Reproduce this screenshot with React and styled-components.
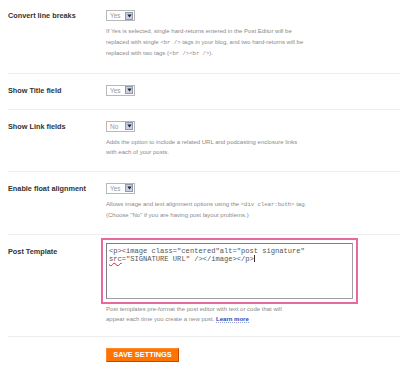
import styled, { createGlobalStyle } from 'styled-components'

const GlobalStyle = createGlobalStyle`
  html, body {
    margin: 0;
    padding: 0;
    background: #fff;
  }
  body {
    font-family: "Liberation Sans", Arial, sans-serif;
  }
`;

const Page = styled.div`
  width: 400px;
  padding-left: 8px;
  box-sizing: border-box;
`;

const Row = styled.div`
  display: grid;
  grid-template-columns: 98px 1fr;
  padding: 11px 0 ${p => p.$bottom ?? 13}px;
  border-bottom: 1px solid #ececec;

  &:first-child {
    padding-top: 10px;
  }
`;

const Label = styled.div`
  font-size: 7.3px;
  font-weight: bold;
  color: #333;
  line-height: 11px;
`;

const Field = styled.div`
  display: flex;
  flex-direction: column;
  align-items: flex-start;
`;

const Select = styled.div`
  display: flex;
  align-items: center;
  justify-content: space-between;
  width: ${p => p.$width || 29}px;
  height: 11px;
  box-sizing: border-box;
  border: 1px solid #b8b8b8;
  padding: 0 1px 0 3px;
  font-size: 6.5px;
  color: #999;
`;

const Arrow = styled.span`
  display: flex;
  align-items: center;
  justify-content: center;
  width: 8px;
  height: 8px;
  box-sizing: border-box;
  background: #c9d0e2;
  border: 1px solid #8f9ab5;
`;

const Help = styled.p`
  margin: ${p => p.$top ?? 5}px 0 0;
  font-size: 6px;
  line-height: 10.5px;
  color: #8a8a8a;
  white-space: nowrap;
`;

const Code = styled.span`
  font-family: "Liberation Mono", "Courier New", monospace;
  font-size: 5.6px;
`;

const Highlight = styled.div`
  margin: -8px 0 0 -5px;
  padding: 3px;
  border: 2px solid #e8699e;
`;

const TextBox = styled.div`
  width: 247px;
  height: 56px;
  box-sizing: border-box;
  border: 1px solid #a0a0a0;
  border-top-color: #808080;
  border-left-color: #808080;
  padding: 3px 2px;
  font-family: "Liberation Mono", "Courier New", monospace;
  font-size: 7.1px;
  line-height: 8px;
  color: #555;
  white-space: pre;
`;

const Misspelled = styled.span`
  text-decoration: underline wavy #e02020;
  text-decoration-thickness: 0.6px;
`;

const Caret = styled.span`
  display: inline-block;
  width: 0;
  height: 7px;
  border-left: 1px solid #333;
  vertical-align: -1px;
`;

const LearnMore = styled.a`
  color: #2a44b8;
  font-weight: bold;
  text-decoration: none;
  border-bottom: 1px dotted #8fa0dd;
`;

const ButtonRow = styled.div`
  display: flex;
  padding: 11px 0 0 98px;
`;

const SaveButton = styled.button`
  width: 73px;
  height: 14px;
  padding: 0;
  border: 1px solid #ff8a2a;
  border-right-color: #c04a00;
  border-bottom-color: #c04a00;
  background: #ff7400;
  color: #fff;
  font-family: "Liberation Sans", Arial, sans-serif;
  font-size: 7.4px;
  font-weight: bold;
  line-height: 12px;
  cursor: pointer;
`;

function Dropdown({ value, width }) {
  return (
    <Select $width={width}>
      <span>{value}</span>
      <Arrow>
        <svg width="5" height="4" viewBox="0 0 5 4">
          <path d="M0.3 0.6 L4.7 0.6 L2.5 3.6 Z" fill="#222" />
        </svg>
      </Arrow>
    </Select>
  )
}

function App() {
  return (
    <Page>
      <GlobalStyle />
      <Row>
        <Label>Convert line breaks</Label>
        <Field>
          <Dropdown value="Yes" />
          <Help>
            If Yes is selected, single hard-returns entered in the Post Editor will be<br />
            replaced with single <Code>&lt;br /&gt;</Code> tags in your blog, and two hard-returns will be<br />
            replaced with two tags (<Code>&lt;br /&gt;&lt;br /&gt;</Code>).
          </Help>
        </Field>
      </Row>
      <Row>
        <Label>Show Title field</Label>
        <Field>
          <Dropdown value="Yes" />
        </Field>
      </Row>
      <Row>
        <Label>Show Link fields</Label>
        <Field>
          <Dropdown value="No" />
          <Help>
            Adds the option to include a related URL and podcasting enclosure links<br />
            with each of your posts.
          </Help>
        </Field>
      </Row>
      <Row>
        <Label>Enable float alignment</Label>
        <Field>
          <Dropdown value="Yes" />
          <Help>
            Allows image and text alignment options using the <Code>&lt;div clear:both&gt;</Code> tag.<br />
            (Choose "No" if you are having post layout problems.)
          </Help>
        </Field>
      </Row>
      <Row $bottom={11}>
        <Label>Post Template</Label>
        <Field>
          <Highlight>
            <TextBox>
              {'<p><image class="centered"alt="post signature"\n'}
              <Misspelled>src</Misspelled>
              {'="SIGNATURE URL" /></image></p>'}
              <Caret />
            </TextBox>
          </Highlight>
          <Help $top={0}>
            Post templates pre-format the post editor with text or code that will<br />
            appear each time you create a new post. <LearnMore href="#">Learn more</LearnMore>
          </Help>
        </Field>
      </Row>
      <ButtonRow>
        <SaveButton>SAVE SETTINGS</SaveButton>
      </ButtonRow>
    </Page>
  )
}

export default App
